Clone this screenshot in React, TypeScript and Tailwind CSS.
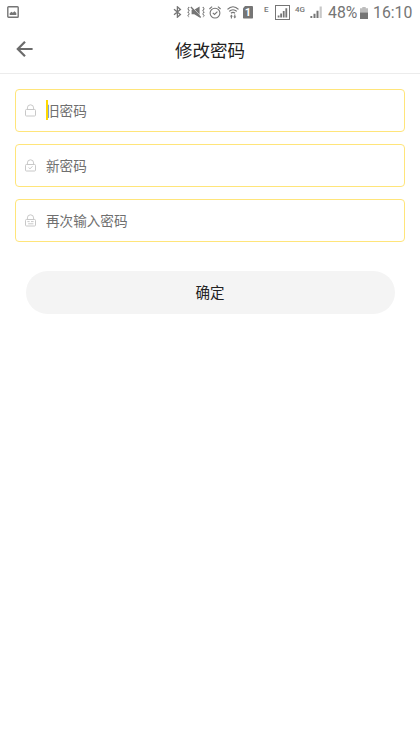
import { useState } from 'react';
import type { ReactNode } from 'react';

const StatusBar = () => (
  <div className="flex h-[25px] items-center pl-[7px] text-[#757575] font-[Roboto,sans-serif]">
    <svg className="-mt-px w-3 h-3 shrink-0" viewBox="0 0 12 12">
      <rect x="0.8" y="0.8" width="10.4" height="10.4" rx="0.8" fill="none" stroke="currentColor" strokeWidth="1.4" />
      <path d="M2.7 8.9V7.3l1.8-1.6 1.3 1 1.7-1.5 1.8 1.9v1.8z" fill="currentColor" />
    </svg>

    {/* bluetooth */}
    <svg className="ml-[154px] -mt-px w-[9px] h-3 shrink-0" viewBox="0 0 9 12" fill="none" stroke="currentColor" strokeWidth="1.3">
      <path d="M1 3.2l6.4 5.4-3 2.6V.8l3 2.6L1 8.8" />
    </svg>

    {/* vibrate, sound off */}
    <svg className="ml-[5px] -mt-px w-[18px] h-3 shrink-0" viewBox="0 0 18 12">
      <path d="M4.6 3.7h2.6L12.6.6v10.8L7.2 8.3H4.6z" fill="currentColor" />
      <path d="M4.9.7l9.4 10.2" stroke="#fff" strokeWidth="0.8" />
      <path d="M3.9.9l9.8 10.6" stroke="currentColor" strokeWidth="1.4" />
      <path d="M2.2 1L.9 2.7l1.3 1.7L.9 6.1l1.3 1.7L.9 9.5l1.3 1.7M15.8 1l1.3 1.7-1.3 1.7 1.3 1.7-1.3 1.7 1.3 1.7-1.3 1.7" fill="none" stroke="currentColor" strokeWidth="1.1" strokeDasharray="1.5 0.6" />
    </svg>

    {/* alarm */}
    <svg className="ml-1 -mt-px w-3 h-[13px] shrink-0" viewBox="0 0 12 13" fill="none" stroke="currentColor" strokeWidth="1.1">
      <circle cx="6" cy="7.1" r="4.9" />
      <path d="M.4 3L3.1.7M11.6 3L8.9.7M3.8 6.9l1.7 1.6 2.9-2.8" />
    </svg>

    {/* wifi */}
    <svg className="ml-[6px] -mt-px w-3 h-[13px] shrink-0" viewBox="0 0 12 13" fill="none" stroke="currentColor" strokeWidth="1.3">
      <path d="M.5 3.4C3.8.1 8.2.1 11.5 3.4M2.2 5.4c2.2-2.1 5.4-2.1 7.6 0M4 7.3c1.2-1.1 2.8-1.1 4 0" />
      <path d="M2.9 10.6l1.5-2.1 1.5 2.1zM6.3 10.5h3l-1.5 2.1z" fill="currentColor" stroke="none" />
      <path d="M4.4 10v2.6M7.8 8.5v2.4" strokeWidth="1.1" />
    </svg>

    <div className="ml-1 -mt-px flex w-[10px] h-[13px] shrink-0 items-center justify-center rounded-[1px] bg-[#757575] text-[11px] font-bold leading-[13px] text-white [clip-path:polygon(25%_0,100%_0,100%_100%,0_100%,0_22%)]">
      1
    </div>

    <span className="ml-[11px] -mt-[6px] w-[5px] text-[8px] font-medium leading-none">E</span>

    <svg className="ml-[6px] -mt-px w-[15px] h-[15px] shrink-0" viewBox="0 0 15 15">
      <rect x="0.5" y="0.5" width="14" height="14" fill="none" stroke="currentColor" />
      <path d="M2.7 10.4h1.8v2H2.7zM5.2 8.4H7v4H5.2zM7.8 5.9h1.8v6.5H7.8zM10.4 3.2h1.8v9.2h-1.8z" fill="currentColor" />
    </svg>

    <span className="ml-[5px] -mt-[6px] w-3 text-[8px] font-medium leading-none">4G</span>

    <svg className="ml-[3px] -mt-px w-3 h-3 shrink-0" viewBox="0 0 12 12">
      <path d="M.4 10h1.9v2H.4zM3.5 7.8h2V12h-2zM6.5 4.7h2V12h-2z" fill="currentColor" />
      <path d="M9.6.5h2.2V12H9.6z" fill="#c8c8c8" />
    </svg>

    <span className="ml-[6px] w-[29px] whitespace-nowrap pt-px text-[15.8px] leading-none">48%</span>

    <svg className="ml-[3px] w-2 h-3 shrink-0" viewBox="0 0 8 12">
      <path d="M2.3 0h3.4v1.3H8V6H0V1.3h2.3z" fill="#bdbdbd" />
      <path d="M0 5.6h8V12H0z" fill="currentColor" />
    </svg>

    <span className="ml-[5px] whitespace-nowrap pt-px text-[15.8px] leading-none">16:10</span>
  </div>
);

const LockIcon = ({ children }: { children?: ReactNode }) => (
  <svg className="w-[11px] h-[13px] shrink-0" viewBox="0 0 11 13" fill="none" stroke="#c8c8c8" strokeWidth="1">
    <path d="M2.4 5.5V3.9a3.1 3.1 0 0 1 6.2 0v1.6" />
    <rect x="0.5" y="5.5" width="10" height="6.5" rx="0.9" />
    {children}
  </svg>
);

const fields = [
  { id: 'old', placeholder: '旧密码', mark: null },
  { id: 'new', placeholder: '新密码', mark: <path d="M3.7 8.5l1.3 1.4 2.5-2.7" /> },
  { id: 'repeat', placeholder: '再次输入密码', mark: <path d="M2.4 7.6h2.2M6 7.6h2.6M3.2 9.8h5.2" /> },
];

export default function App() {
  const [values, setValues] = useState<Record<string, string>>({});

  return (
    <div className="min-h-screen bg-white font-['Noto_Sans_CJK_SC',sans-serif]">
      <StatusBar />

      <header className="grid h-[49px] grid-cols-[60px_1fr_60px] items-center border-b border-[#ececec]">
        <button className="ml-4 h-[18px] w-[18px]" aria-label="返回">
          <svg className="h-[18px] w-[18px]" viewBox="0 0 18 18" fill="none" stroke="#6b6b6b" strokeWidth="2.2">
            <path d="M9 1.7L1.8 9 9 16.3M1.8 9H16.6" />
          </svg>
        </button>
        <h1 className="pt-px text-center text-[17.5px] leading-6 text-[#212121]">修改密码</h1>
      </header>

      <main className="flex flex-col gap-3 px-[15px] pt-[15px]">
        {fields.map((field) => (
          <label key={field.id} className="flex h-[43px] items-center rounded-[4px] border border-[#ffe57a] pl-[9px]">
            <LockIcon>{field.mark}</LockIcon>
            <span className="relative -mt-[2px] ml-[10px] flex-1">
              {field.id === 'old' && <span className="absolute left-0 top-0 h-5 w-[2px] bg-[#ffd900]" />}
              <input
                className="block h-5 w-full bg-transparent text-[13.6px] leading-5 text-[#333] outline-none placeholder:text-[#6f6f6f]"
                placeholder={field.placeholder}
                value={values[field.id] ?? ''}
                onChange={(e) => setValues({ ...values, [field.id]: e.target.value })}
              />
            </span>
          </label>
        ))}

        <button className="mx-[10.5px] mt-[17px] h-[43px] rounded-full bg-[#f4f4f4] pb-px text-[14.5px] text-[#222]">
          确定
        </button>
      </main>
    </div>
  );
}
